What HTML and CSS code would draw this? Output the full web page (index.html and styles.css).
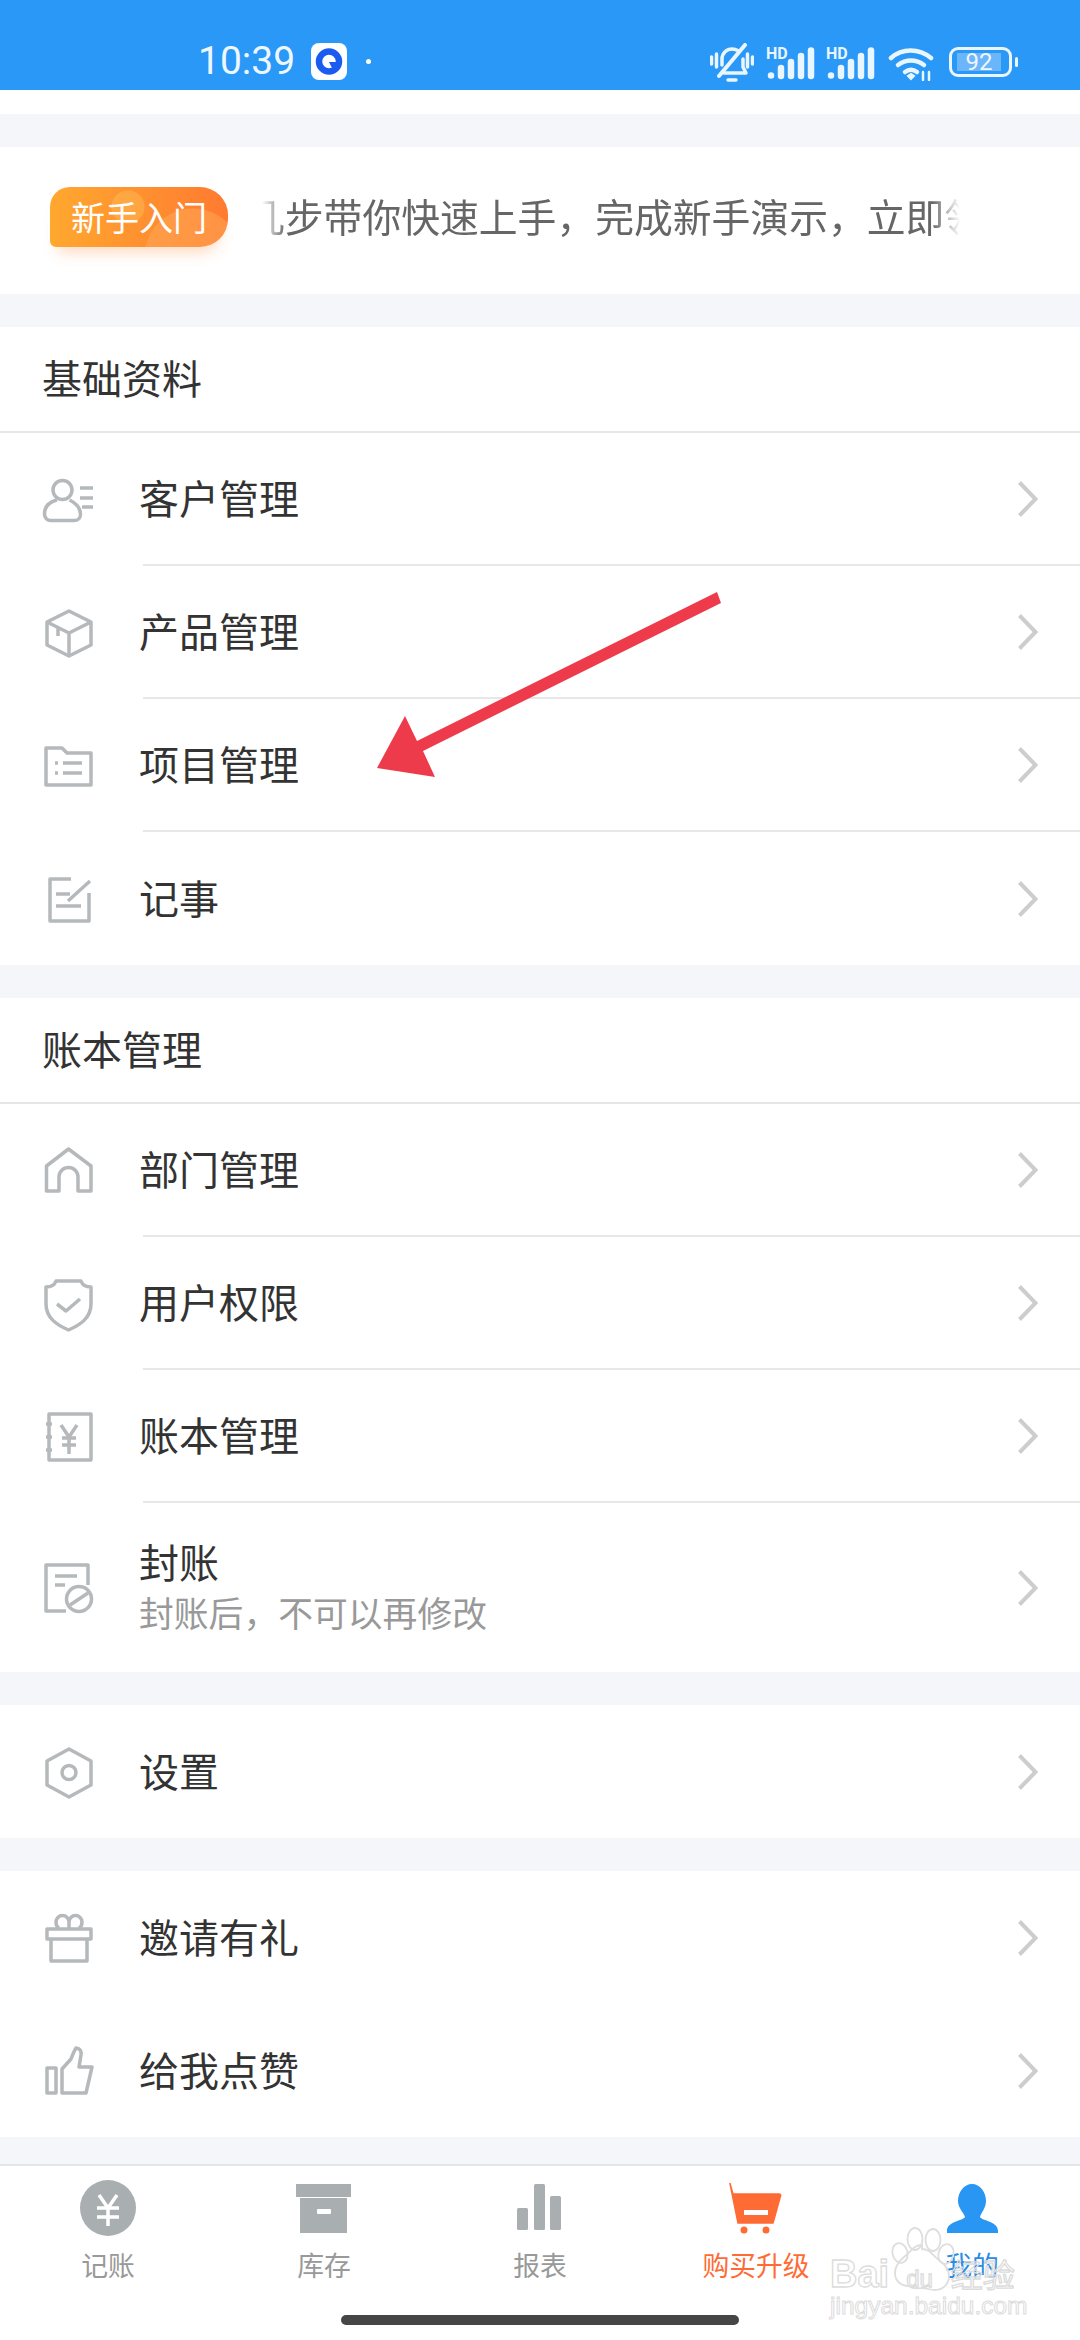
FILE: index.html
```html
<!DOCTYPE html>
<html lang="zh-CN">
<head>
<meta charset="utf-8">
<title>我的</title>
<link rel="stylesheet" href="styles.css">
</head>
<body>
<div class="page">
  <header class="status">
    <div class="status-left">
      <span class="time">10:39</span>
      <svg class="app-ico" viewBox="0 0 36 37"><rect width="36" height="37" rx="8" fill="#fff"/><circle cx="18" cy="18.500" r="10" fill="none" stroke="#1a5cf0" stroke-width="6.500"/><path d="M18 19h9v8l-6-2z" fill="#1a5cf0"/></svg>
      <span class="dot"></span>
    </div>
    <div class="status-right">
      <svg class="s-bell" viewBox="0 0 44 39" fill="none" stroke="#e9f5ff" stroke-width="3.500" stroke-linecap="round" stroke-linejoin="round"><path d="M1.500 14v7M6.500 11v13M37.500 11v13M42.500 14v7"/><path d="M12 22v-6c0-6 5-10 10-10 3 0 5 1 7 2M33 16v8l3 6H14"/><path d="M35 2 9 33" stroke-width="4"/><path d="M18 37h8"/></svg>
      <svg class="s-sig" viewBox="0 0 50 32"><text x="0" y="12" class="hd">HD</text><g stroke="#e9f5ff" stroke-width="6.500" stroke-linecap="round"><path d="M5 28.500v.100M15 21v8M25 15v14M35 9v20M45 3.500V29"/></g></svg>
      <svg class="s-sig" viewBox="0 0 50 32"><text x="0" y="12" class="hd">HD</text><g stroke="#e9f5ff" stroke-width="6.500" stroke-linecap="round"><path d="M5 28.500v.100M15 21v8M25 15v14M35 9v20M45 3.500V29"/></g></svg>
      <svg class="s-wifi" viewBox="0 0 46 34" fill="none" stroke="#e9f5ff" stroke-width="4.500" stroke-linecap="round"><path d="M3 11C14 1 31 1 43 11"/><path d="M10 18c8-6 18-6 26 0"/><path d="M17 25c4-3 8-3 12 0"/><path d="m20 29 3 3 3-3-3-2z" fill="#e9f5ff" stroke-width="2"/><path d="M35 25v8M41 25v8" stroke-width="2.500"/></svg>
      <div class="battery"><div class="batt-body"><span class="batt-fill">92</span></div><span class="batt-nub"></span></div>
    </div>
  </header>
  <div class="strip"></div>
  <div class="gap"></div>

  <section class="banner">
    <div class="badge">新手入门</div>
    <div class="marquee"><span class="marquee-text">几步带你快速上手，完成新手演示，立即领</span></div>
  </section>
  <div class="gap"></div>

  <section class="card">
    <h2 class="card-title">基础资料</h2>
    <div class="row"><div class="ico-cell"><svg class="ico" viewBox="0 0 60 60"><circle cx="24.500" cy="20" r="9.500"/><path d="M19 30C11 32 6.500 37 6.500 44c0 4 3 6.500 6 6.500h24c4 0 6-3 6-6 0-6-4-11-11-14.500"/><path d="M42 18h13M42 28h13M44 37h11"/></svg></div><div class="row-body"><span class="row-label">客户管理</span><svg class="chev" viewBox="0 0 20 36"><path d="m1.500 1.500 16 16.500-16 16.500"/></svg></div></div>
    <div class="row"><div class="ico-cell"><svg class="ico" viewBox="0 0 60 60"><path d="m31 8 22 11v23L31 53 9 42V19z"/><path d="m9 19 22 11 22-11M31 30v23M20 24.500V33"/></svg></div><div class="row-body"><span class="row-label">产品管理</span><svg class="chev" viewBox="0 0 20 36"><path d="m1.500 1.500 16 16.500-16 16.500"/></svg></div></div>
    <div class="row"><div class="ico-cell"><svg class="ico" viewBox="0 0 60 60"><path d="M8 12h16l5 5h24v32H8z"/><path d="M17 27h3M25 27h19M17 37h3M25 37h19"/></svg></div><div class="row-body"><span class="row-label">项目管理</span><svg class="chev" viewBox="0 0 20 36"><path d="m1.500 1.500 16 16.500-16 16.500"/></svg></div></div>
    <div class="row row-last"><div class="ico-cell"><svg class="ico" viewBox="0 0 60 60"><path d="M33 10H12v42h39V24"/><path d="M18 25h14M18 37h25M30 32l22-20"/></svg></div><div class="row-body"><span class="row-label">记事</span><svg class="chev" viewBox="0 0 20 36"><path d="m1.500 1.500 16 16.500-16 16.500"/></svg></div></div>
  </section>
  <div class="gap"></div>

  <section class="card">
    <h2 class="card-title">账本管理</h2>
    <div class="row"><div class="ico-cell"><svg class="ico" viewBox="0 0 60 60"><path d="M30.500 8 53 25v25H40V36a9.500 9.500 0 0 0-19 0v14H8.500V25z"/></svg></div><div class="row-body"><span class="row-label">部门管理</span><svg class="chev" viewBox="0 0 20 36"><path d="m1.500 1.500 16 16.500-16 16.500"/></svg></div></div>
    <div class="row"><div class="ico-cell"><svg class="ico" viewBox="0 0 60 60"><path d="M18 7h25q2 6 10 6v17c0 14-11 21-22.500 26C19 51 8 44 8 30V13q8 0 10-6z"/><path d="m19 30 9 7 14-12"/></svg></div><div class="row-body"><span class="row-label">用户权限</span><svg class="chev" viewBox="0 0 20 36"><path d="m1.500 1.500 16 16.500-16 16.500"/></svg></div></div>
    <div class="row"><div class="ico-cell"><svg class="ico" viewBox="0 0 60 60"><path d="M11 7h42v46H11z"/><path d="M8 17h6M8 30h6M8 43h6"/><path d="m23 18 8 12 8-12M24 31h14M24 38h14M31 30v17"/></svg></div><div class="row-body"><span class="row-label">账本管理</span><svg class="chev" viewBox="0 0 20 36"><path d="m1.500 1.500 16 16.500-16 16.500"/></svg></div></div>
    <div class="row row-tall row-last"><div class="ico-cell"><svg class="ico" viewBox="0 0 60 60"><path d="M50 27V7H8v46h20"/><path d="M17 18h22M17 27h10"/><circle cx="41" cy="41" r="12.500"/><path d="m32 47 18-12"/></svg></div><div class="row-body"><div class="row-text"><span class="row-label">封账</span><span class="row-sub">封账后，不可以再修改</span></div><svg class="chev" viewBox="0 0 20 36"><path d="m1.500 1.500 16 16.500-16 16.500"/></svg></div></div>
  </section>
  <div class="gap"></div>

  <section class="card">
    <div class="row row-last"><div class="ico-cell"><svg class="ico" viewBox="0 0 60 60"><path d="m31 7 22 12v24L31 55 9 43V19z"/><circle cx="31" cy="30.500" r="7"/></svg></div><div class="row-body"><span class="row-label">设置</span><svg class="chev" viewBox="0 0 20 36"><path d="m1.500 1.500 16 16.500-16 16.500"/></svg></div></div>
  </section>
  <div class="gap"></div>

  <section class="card">
    <div class="row row-last"><div class="ico-cell"><svg class="ico" viewBox="0 0 60 60"><path d="M9 21h44v10H9zM13 31h36v22H13z"/><path d="M31 20v-6a6.500 6.500 0 1 0-13 0c0 3 1 5 3 6M31 20v-6a6.500 6.500 0 1 1 13 0c0 3-1 5-3 6"/></svg></div><div class="row-body"><span class="row-label">邀请有礼</span><svg class="chev" viewBox="0 0 20 36"><path d="m1.500 1.500 16 16.500-16 16.500"/></svg></div></div>
    <div class="row row-last"><div class="ico-cell"><svg class="ico" viewBox="0 0 60 60"><path d="M9 27h9v25H9z"/><path d="M24 52V28l9-10q3-8 5-11 6 1 5 7l-2 12h13l-6 26z"/></svg></div><div class="row-body"><span class="row-label">给我点赞</span><svg class="chev" viewBox="0 0 20 36"><path d="m1.500 1.500 16 16.500-16 16.500"/></svg></div></div>
  </section>
  <div class="gap gap-end"></div>

  <nav class="tabbar">
    <div class="tabs">
      <div class="tab"><svg class="tab-ico" viewBox="0 0 72 60"><circle cx="36" cy="31" r="28" fill="#a9aeb1"/><path d="m27 18 9 13 9-13M25 31h22M25 40h22M36 31v18" fill="none" stroke="#fff" stroke-width="3.500"/></svg><span class="tab-label">记账</span></div>
      <div class="tab"><svg class="tab-ico" viewBox="0 0 72 60"><path d="M8 7h55v13H8zM12 21h47v35H12z" fill="#a9aeb1"/><rect x="29" y="32" width="14" height="5" rx="1" fill="#fff"/></svg><span class="tab-label">库存</span></div>
      <div class="tab"><svg class="tab-ico" viewBox="0 0 72 60" fill="#a9aeb1"><rect x="13" y="31" width="11" height="22" rx="1.500"/><rect x="30" y="7" width="11" height="46" rx="1.500"/><rect x="46" y="19" width="11" height="34" rx="1.500"/></svg><span class="tab-label">报表</span></div>
      <div class="tab tab-buy"><svg class="tab-ico" viewBox="0 0 72 60"><path d="M10 6.500 13 17h46q2 0 1.500 2L53 46H18z" fill="#ff6b35" stroke="#ff6b35" stroke-width="1.500" stroke-linejoin="round"/><rect x="24" y="33" width="24" height="5" fill="#fff"/><circle cx="24" cy="53" r="3.500" fill="#ff6b35"/><circle cx="46" cy="53" r="3.500" fill="#ff6b35"/></svg><span class="tab-label">购买升级</span></div>
      <div class="tab tab-me"><svg class="tab-ico" viewBox="0 0 72 60"><path d="M36 7c8 0 14 8 14 17 0 7-5 12-6 16 2 4 18 4 18 14v2H11v-2c0-10 16-10 18-14-1-4-7-9-7-16 0-9 6-17 14-17z" fill="#2a96f3"/></svg><span class="tab-label">我的</span></div>
    </div>
    <div class="home-bar"></div>
    <div class="watermark">
      <svg class="paw" viewBox="0 0 200 70" fill="none" stroke="#dedede" stroke-width="1.800"><ellipse cx="70" cy="27" rx="7.500" ry="10" transform="rotate(-15 70 27)"/><ellipse cx="85" cy="13" rx="7.500" ry="11"/><ellipse cx="103" cy="14" rx="7.500" ry="11"/><ellipse cx="116" cy="28" rx="7.500" ry="10" transform="rotate(15 116 28)"/><path d="M92 23c8 0 11 7 18 12 7 5 9 10 9 15 0 9-7 14-14 14-5 0-8-2-13-2s-8 2-13-2c-8 0-14-5-14-13 0-6 3-11 9-16 7-5 9-12 18-12z"/></svg>
      <div class="wm-top"><span>Bai</span><span class="wm-du">du</span><span class="wm-cn">经验</span></div>
      <div class="wm-url">jingyan.baidu.com</div>
    </div>
  </nav>

  <svg class="arrow" viewBox="0 0 1080 1000"><polygon points="717,592 721,603 423,751 435,777 377,768 405,716 417,741" fill="#ee3b4b"/></svg>
</div>
</body>
</html>
```

FILE: styles.css
```css
* { box-sizing: border-box; }
html, body { margin: 0; padding: 0; }
body { font-family: "Noto Sans CJK SC", "Noto Sans", sans-serif; color: #333; background: #fff; }
.page { position: relative; width: 1080px; height: 2340px; overflow: hidden; display: flex; flex-direction: column; background: #fff; }

.status { height: 90px; background: #2a98f6; display: flex; align-items: flex-start; justify-content: space-between; padding: 43px 62px 0 198px; flex: none; }
.status-left { display: flex; align-items: center; height: 37px; }
.time { font-family: Roboto, sans-serif; font-size: 39px; line-height: 37px; color: #eef7ff; font-weight: 400; width: 113px; }
.app-ico { width: 36px; height: 37px; }
.dot { width: 5px; height: 5px; border-radius: 50%; background: #fff; margin-left: 19px; }
.status-right { display: flex; align-items: flex-start; }
.s-bell { width: 44px; height: 39px; }
.s-sig { width: 50px; height: 32px; margin: 4px 0 0 12px; overflow: visible; }
.s-sig + .s-sig { margin-left: 10px; }
.hd { font-family: Roboto, sans-serif; font-weight: 700; font-size: 16px; fill: #e9f5ff; }
.s-wifi { width: 46px; height: 34px; margin: 4px 0 0 12px; }
.battery { display: flex; align-items: center; margin: 4px 0 0 15px; height: 30px; }
.batt-body { width: 63px; height: 30px; border: 3px solid #e9f5ff; border-radius: 9px; padding: 3px 8px 3px 5px; }
.batt-fill { display: block; height: 18px; background: #6bb5fb; font-family: Roboto, sans-serif; font-size: 24px; line-height: 18px; color: #eef7ff; text-align: center; }
.batt-nub { width: 3px; height: 10px; background: #e9f5ff; border-radius: 2px; margin-left: 3px; }

.strip { height: 24px; flex: none; }
.gap { height: 33px; flex: none; background: #f5f6fa; }
.gap-end { height: 27px; }

.banner { height: 147px; flex: none; display: flex; align-items: center; padding-left: 50px; }
.badge { width: 178px; height: 60px; border-radius: 20px 28px 28px 6px; background: radial-gradient(circle at 78px 20px, rgba(255,190,90,.45) 0 16px, transparent 17px), radial-gradient(circle at 143px 70px, rgba(255,170,90,.5) 0 48px, transparent 49px), linear-gradient(90deg, #ffa82f, #ff7a30); box-shadow: 0 14px 14px -8px rgba(255,140,60,.3); color: #fff; font-size: 34px; line-height: 60px; text-align: center; flex: none; margin-top: -8px; }
.marquee { width: 698px; margin-left: 34px; padding-bottom: 12px; overflow: hidden; -webkit-mask-image: linear-gradient(90deg, transparent 0, #000 24px, #000 670px, transparent 698px); mask-image: linear-gradient(90deg, transparent 0, #000 24px, #000 670px, transparent 698px); }
.marquee-text { display: block; white-space: nowrap; font-size: 38.800px; line-height: 56px; color: #666; margin-left: -16px; }

.card { flex: none; background: #fff; }
.card-title { margin: 0; height: 106px; border-bottom: 2px solid #e5e6e8; padding-left: 42px; font-size: 40px; font-weight: 400; line-height: 100px; color: #333; }
.row { display: flex; height: 133px; }
.row-tall { height: 169px; }
.ico-cell { width: 143px; flex: none; display: flex; align-items: center; padding-left: 38px; }
.ico { width: 60px; height: 60px; fill: none; stroke: #b5b9bb; stroke-width: 3.500; stroke-linejoin: round; }
.row-body { flex: 1; display: flex; align-items: center; justify-content: space-between; padding-right: 42px; border-bottom: 2px solid #e7e7e7; }
.row-last .row-body { border-bottom: 0; }
.row-label { font-size: 40px; line-height: 56px; color: #333; margin: -4px 0 0 -4px; }
.row-text { display: flex; flex-direction: column; margin: -4px 0 0 -4px; }
.row-text .row-label { line-height: 50px; margin: 0; }
.row-sub { font-size: 34.800px; line-height: 46px; margin-top: 3px; color: #999; }
.chev { width: 20px; height: 36px; fill: none; stroke: #cdcdcd; stroke-width: 4; }

.tabbar { position: relative; flex: 1; border-top: 2px solid #e3e5e8; background: #fff; }
.tabs { display: grid; grid-template-columns: repeat(5, 1fr); }
.tab { display: flex; flex-direction: column; align-items: center; padding-top: 11px; }
.tab-ico { width: 72px; height: 60px; }
.tab-label { font-size: 26.800px; line-height: 38px; margin-top: 9px; color: #999; }
.tab-buy .tab-label { color: #ff6b35; }
.tab-me .tab-label { color: #2a8ce8; }
.home-bar { width: 398px; height: 10px; border-radius: 5px; background: #464646; margin: 31px auto 0; }
.watermark { position: absolute; left: 830px; top: 60px; width: 200px; height: 92px; }
.paw { position: absolute; left: 0; top: 0; width: 200px; height: 70px; }
.wm-top { position: relative; margin-top: 28px; display: flex; align-items: baseline; font-family: "Liberation Sans", sans-serif; font-weight: 700; font-size: 38px; line-height: 38px; color: transparent; -webkit-text-stroke: 1.300px #dcdcdc; white-space: nowrap; }
.wm-du { font-size: 24px; font-weight: 400; margin-left: 17px; }
.wm-cn { font-family: "Noto Sans CJK SC", sans-serif; font-size: 32px; font-weight: 400; margin-left: 18px; }
.wm-url { font-family: "Liberation Sans", sans-serif; font-size: 24.500px; line-height: 28px; margin-top: -6px; color: transparent; -webkit-text-stroke: 1px #dcdcdc; white-space: nowrap; }

.arrow { position: absolute; left: 0; top: 0; width: 1080px; height: 1000px; pointer-events: none; }
```
